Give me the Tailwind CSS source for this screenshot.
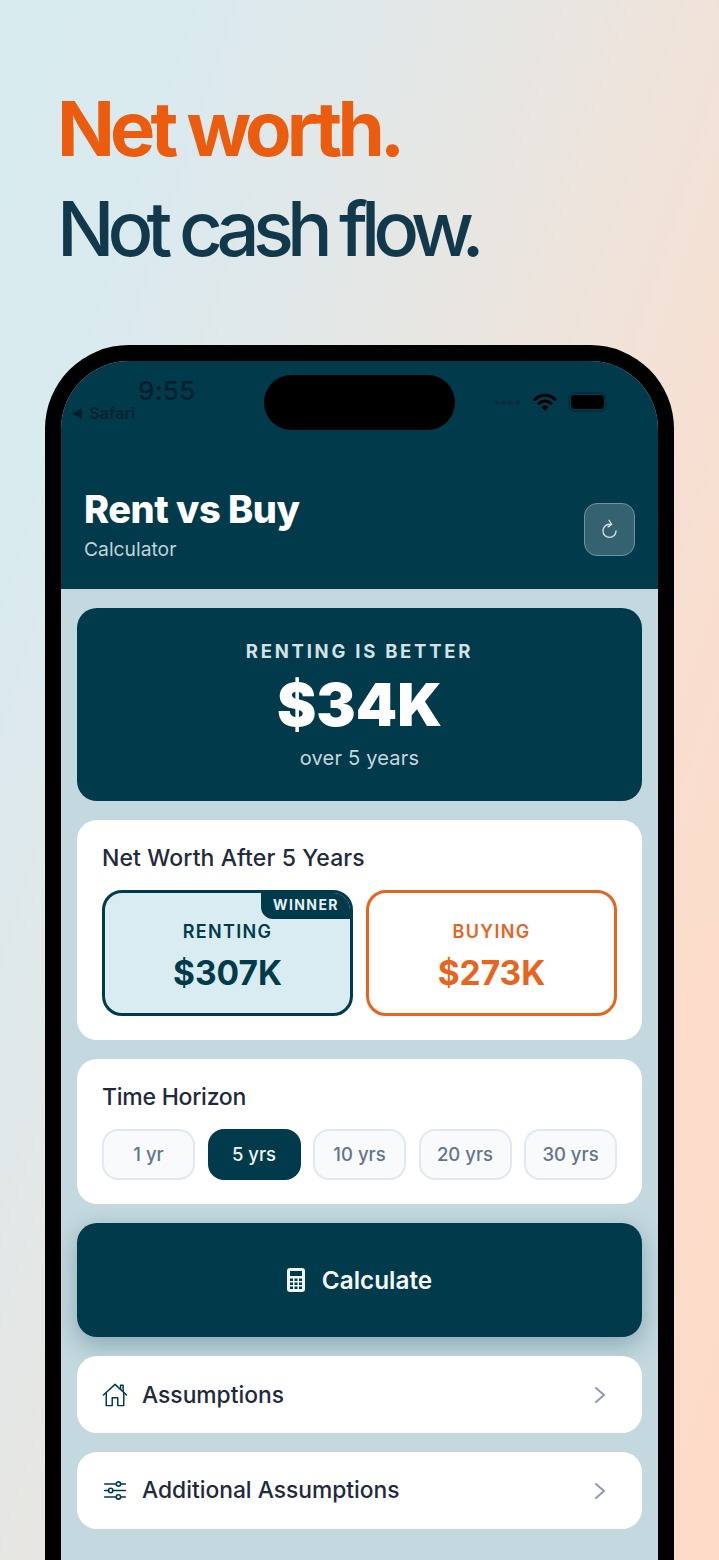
<!DOCTYPE html>
<html>

<head>
    <title>Rent vs Buy</title>
    <script src="https://cdn.jsdelivr.net/npm/@tailwindcss/browser@4"></script>
</head>

<body class="font-['Inter',sans-serif]">
    <div class="w-[719px] h-[1560px] overflow-hidden bg-[linear-gradient(108deg,#d8ebef_0%,#d9ebef_15%,#dce9ee_20%,#e5e7e5_39%,#f0e3da_58%,#f5e0d3_67%,#fbddcc_80%,#fedbc8_100%)]">
        <!-- Headline -->
        <div class="pt-[80px] pl-[57px] h-[345px]">
            <h1 class="text-[76px] leading-[96px] font-bold tracking-[-4.9px] text-[#ec5c0e]">Net worth.</h1>
            <h2 class="text-[76px] leading-[104px] font-[450] tracking-[-6.9px] text-[#12384c]">Not cash flow.</h2>
        </div>

        <!-- Phone -->
        <div class="ml-[45px] w-[629px] h-[1300px] bg-black rounded-t-[84px] pt-4 px-4">
            <div class="relative h-[1284px] rounded-t-[68px] overflow-hidden bg-[#c3d8df]">
                <!-- Header -->
                <div class="h-[228px] bg-[#003a4b] relative">
                    <div class="absolute left-[77px] top-[14px] text-[26px] leading-[32px] font-medium tracking-[0.3px] text-[#01202c]">9:55</div>
                    <div class="absolute left-[11px] top-[43px] flex items-center gap-[7px] text-[16.500px] leading-[18px] font-medium text-[#01202c]">
                        <svg width="10" height="11" viewBox="0 0 10 11"><path d="M10 0v11L0 5.500z" fill="#01202c" /></svg>
                        <span>Safari</span>
                    </div>
                    <div class="absolute left-[433px] top-[31px] flex items-center gap-[9px]">
                        <div class="flex gap-[2px]">
                            <span class="w-[5px] h-[5px] rounded-full bg-[#0a2f3e]"></span>
                            <span class="w-[5px] h-[5px] rounded-full bg-[#0a2f3e]"></span>
                            <span class="w-[5px] h-[5px] rounded-full bg-[#0a2f3e]"></span>
                            <span class="w-[5px] h-[5px] rounded-full bg-[#0a2f3e]"></span>
                        </div>
                        <svg class="ml-[3px]" width="26" height="20" viewBox="0 0 26 20" fill="none" stroke="#000" stroke-width="3" stroke-linecap="round">
                            <path d="M3 7.500a14 14 0 0 1 20 0" />
                            <path d="M7 11.500a8.500 8.500 0 0 1 12 0" />
                            <path d="M13 19l-3.500-4a5 5 0 0 1 7 0z" fill="#000" stroke="none" />
                        </svg>
                        <div class="ml-[1px] w-[39px] h-[20px] rounded-[7px] border-2 border-[#022f3e] p-[1px] flex shrink-0">
                            <div class="flex-1 rounded-[4px] bg-black"></div>
                        </div>
                    </div>
                    <div class="absolute left-[23px] top-[125px]">
                        <div class="text-[38px] leading-[46px] font-extrabold tracking-[-0.5px] text-white">Rent vs Buy</div>
                        <div class="text-[19.300px] leading-[24px] mt-[5px] text-[#c0d3da]">Calculator</div>
                    </div>
                    <div class="absolute left-[523px] top-[142px] w-[51px] h-[53px] rounded-[13px] bg-[#346271] border border-[#6f939f] flex items-center justify-center">
                        <svg width="21" height="21" viewBox="0 0 24 24" fill="none" stroke="#d5e2e6" stroke-width="1.500" stroke-linecap="round" stroke-linejoin="round">
                            <path d="M19.500 13.500a7.500 7.500 0 1 1-7.500-7.500h2" />
                            <path d="M11.500 1.500l3 4.500-4 3" />
                        </svg>
                    </div>
                </div>

                <div class="absolute left-[203px] top-[14px] w-[191px] h-[55px] rounded-full bg-black"></div>

                <!-- Content -->
                <div class="px-4 pt-[19px] flex flex-col gap-[19px]">
                    <div class="h-[193px] rounded-[20px] bg-[#003a4b] flex flex-col items-center pt-[31px]">
                        <div class="text-[18.500px] leading-[24px] font-bold tracking-[2.75px] text-[#d3e2e7]">RENTING IS BETTER</div>
                        <div class="text-[59px] leading-[72px] font-black text-white mt-[6px]">$34K</div>
                        <div class="text-[20px] leading-[26px] text-[#c6d7dd] mt-[4px] tracking-[0.2px]">over 5 years</div>
                    </div>

                    <div class="h-[220px] rounded-[20px] bg-white px-[25px] pt-[24px]">
                        <div class="text-[23px] leading-[28px] font-medium tracking-[0.1px] text-[#1f2a3d]">Net Worth After 5 Years</div>
                        <div class="flex gap-[13px] mt-[18px]">
                            <div class="relative flex-1 h-[126px] rounded-[20px] bg-[#d8ecf2] border-[3px] border-[#003a4b] overflow-hidden flex flex-col items-center pt-[27px]">
                                <div class="absolute -right-[1px] -top-[1px] w-[90px] h-[27px] rounded-bl-[12px] bg-[#003a4b] text-center text-[14px] leading-[26px] font-bold tracking-[1.400px] text-[#e6f1f4]">WINNER</div>
                                <div class="text-[18px] leading-[24px] font-semibold tracking-[1.300px] text-[#003a4b]">RENTING</div>
                                <div class="text-[33.500px] leading-[40px] font-bold text-[#003a4b] mt-[9px]">$307K</div>
                            </div>
                            <div class="flex-1 h-[126px] rounded-[20px] bg-white border-[3px] border-[#e8641c] flex flex-col items-center pt-[27px]">
                                <div class="text-[18px] leading-[24px] font-semibold tracking-[1.300px] text-[#e8641c]">BUYING</div>
                                <div class="text-[33.500px] leading-[40px] font-bold text-[#e8641c] mt-[9px]">$273K</div>
                            </div>
                        </div>
                    </div>

                    <div class="h-[145px] rounded-[20px] bg-white px-[25px] pt-[24px]">
                        <div class="text-[23px] leading-[28px] font-medium tracking-[-0.25px] text-[#1f2a3d]">Time Horizon</div>
                        <div class="flex justify-between mt-[18px]">
                            <div class="w-[93px] h-[51px] rounded-[16px] bg-[#f8fafc] border-2 border-[#e2e8f0] flex items-center justify-center text-[18.500px] font-medium text-[#64748b]">1 yr</div>
                            <div class="w-[93px] h-[51px] rounded-[16px] bg-[#003a4b] flex items-center justify-center text-[18.500px] font-medium text-[#f1f6f8]">5 yrs</div>
                            <div class="w-[93px] h-[51px] rounded-[16px] bg-[#f8fafc] border-2 border-[#e2e8f0] flex items-center justify-center text-[18.500px] font-medium text-[#64748b]">10 yrs</div>
                            <div class="w-[93px] h-[51px] rounded-[16px] bg-[#f8fafc] border-2 border-[#e2e8f0] flex items-center justify-center text-[18.500px] font-medium text-[#64748b]">20 yrs</div>
                            <div class="w-[93px] h-[51px] rounded-[16px] bg-[#f8fafc] border-2 border-[#e2e8f0] flex items-center justify-center text-[18.500px] font-medium text-[#64748b]">30 yrs</div>
                        </div>
                    </div>

                    <div class="h-[114px] rounded-[20px] bg-[#003a4b] flex items-center justify-center gap-[17px] shadow-[0_8px_24px_rgba(2,58,75,0.3)]">
                        <svg width="18" height="24" viewBox="0 0 18 24">
                            <rect x="0" y="0" width="18" height="24" rx="3" fill="#f1f6f8" />
                            <rect x="3" y="3" width="12" height="5" fill="#003a4b" />
                            <path d="M3 10.500h3v2.500H3zM7.500 10.500h3v2.500h-3zM12 10.500h3v2.500h-3zM3 14.500h3V17H3zM7.500 14.500h3V17h-3zM12 14.500h3V17h-3zM3 18.500h3V21H3zM7.500 18.500h3V21h-3zM12 18.500h3V21h-3z" fill="#003a4b" />
                        </svg>
                        <span class="text-[24.300px] font-semibold text-[#f4f8f9]">Calculate</span>
                    </div>

                    <div class="h-[77px] rounded-[20px] bg-white flex items-center pl-[25px] pr-[36px]">
                        <svg width="26" height="24" viewBox="0 0 28 26" fill="none" stroke="#003a4b" stroke-width="1.600" stroke-linejoin="round" stroke-linecap="round">
                            <path d="M1.500 13L14 1.500 26.500 13" />
                            <path d="M4.500 11v13.500h6.500V16h6v8.500h6.500V11" />
                            <path d="M20 6.500V2.500h2.800V9" />
                        </svg>
                        <span class="ml-[14px] flex-1 text-[22.800px] font-medium text-[#1f2a3d] pt-[1px]">Assumptions</span>
                        <svg width="12" height="18" viewBox="0 0 12 18" fill="none" stroke="#8c9bb2" stroke-width="2" stroke-linecap="round" stroke-linejoin="round"><path d="M2 2l8 7-8 7" /></svg>
                    </div>

                    <div class="h-[77px] rounded-[20px] bg-white flex items-center pl-[26px] pr-[36px]">
                        <svg width="24" height="19" viewBox="0 0 26 22" fill="none" stroke="#003a4b" stroke-width="1.800" stroke-linecap="round">
                            <path d="M1 3.500h13M19.500 3.500H25M1 11h4.500M11 11h14M1 18.500h13M19.500 18.500H25" />
                            <circle cx="17" cy="3.500" r="2.500" />
                            <circle cx="8" cy="11" r="2.500" />
                            <circle cx="17" cy="18.500" r="2.500" />
                        </svg>
                        <span class="ml-[15px] flex-1 text-[22.800px] font-medium text-[#1f2a3d]">Additional Assumptions</span>
                        <svg width="12" height="18" viewBox="0 0 12 18" fill="none" stroke="#8c9bb2" stroke-width="2" stroke-linecap="round" stroke-linejoin="round"><path d="M2 2l8 7-8 7" /></svg>
                    </div>
                </div>
            </div>
        </div>
    </div>
</body>

</html>
